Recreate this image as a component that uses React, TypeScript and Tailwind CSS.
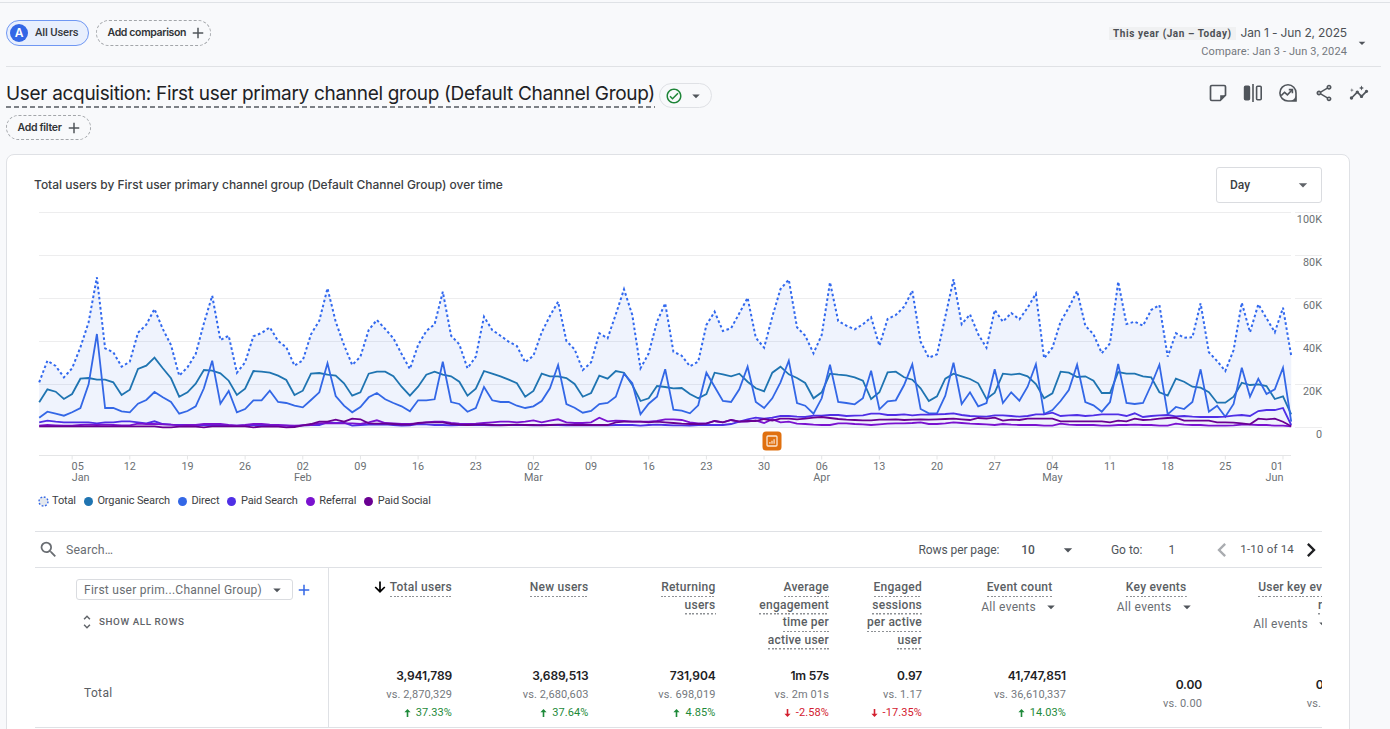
import { useState } from 'react';
import clsx from 'clsx';
import {
  MdAdd,
  MdArrowDropDown,
  MdChevronLeft,
  MdChevronRight,
  MdInsights,
  MdOutlineCheckCircle,
  MdOutlineShare,
  MdSearch,
  MdUnfoldMore,
} from 'react-icons/md';

// Daily series, Jan 1 - Jun 2. Stored in plot units: 667 is zero, 22 is 100K.
const total = [
  532, 467, 483, 517, 490, 427, 352, 217, 430, 442, 485, 470, 383, 359, 312, 372, 420, 512, 487, 447,
  355, 272, 405, 392, 503, 472, 394, 384, 367, 408, 427, 482, 466, 388, 347, 250, 350, 420, 480, 455,
  375, 345, 372, 400, 447, 492, 420, 378, 358, 260, 392, 418, 490, 455, 335, 375, 392, 410, 423, 472,
  452, 382, 333, 290, 408, 433, 495, 472, 385, 400, 328, 253, 330, 490, 445, 350, 295, 440, 452, 484,
  470, 360, 320, 378, 370, 325, 278, 398, 428, 335, 252, 224, 367, 392, 445, 390, 232, 348, 362, 373,
  358, 337, 422, 342, 330, 305, 257, 410, 458, 448, 335, 223, 358, 328, 388, 428, 315, 350, 324, 343,
  308, 266, 460, 428, 350, 308, 258, 362, 388, 445, 415, 230, 357, 350, 362, 315, 300, 455, 385, 398,
  397, 295, 442, 468, 498, 435, 293, 382, 298, 340, 382, 308, 452,
];
const organic = [
  592, 553, 560, 582, 567, 521, 519, 524, 524, 532, 570, 554, 492, 482, 458, 490, 520, 575, 562, 536,
  495, 497, 505, 527, 570, 551, 498, 500, 503, 512, 525, 570, 557, 506, 504, 509, 512, 535, 572, 562,
  506, 500, 500, 514, 545, 572, 545, 509, 500, 509, 514, 530, 572, 551, 498, 506, 514, 524, 535, 575,
  558, 506, 514, 514, 519, 537, 575, 564, 512, 521, 498, 503, 540, 588, 580, 543, 546, 550, 549, 567,
  580, 567, 503, 508, 514, 506, 530, 550, 559, 503, 485, 508, 519, 534, 580, 562, 506, 509, 511, 517,
  527, 582, 562, 502, 500, 517, 524, 550, 588, 574, 521, 506, 514, 522, 535, 582, 563, 506, 509, 506,
  514, 537, 580, 565, 500, 503, 516, 514, 527, 564, 564, 501, 506, 506, 514, 517, 562, 572, 521, 530,
  545, 548, 562, 593, 593, 575, 533, 540, 538, 543, 582, 574, 628,
];
const direct = [
  638, 620, 626, 632, 622, 609, 538, 387, 609, 609, 619, 622, 596, 585, 561, 577, 591, 626, 618, 604,
  550, 467, 596, 558, 622, 612, 586, 586, 557, 591, 594, 602, 607, 585, 562, 475, 573, 602, 622, 606,
  577, 564, 583, 594, 604, 619, 586, 586, 583, 470, 591, 597, 620, 609, 546, 586, 591, 591, 602, 609,
  604, 588, 550, 480, 597, 608, 623, 618, 597, 594, 575, 506, 535, 628, 596, 575, 493, 614, 617, 625,
  601, 503, 545, 588, 591, 553, 485, 591, 609, 580, 532, 467, 594, 602, 626, 580, 479, 591, 594, 598,
  580, 497, 613, 589, 586, 540, 478, 612, 625, 625, 572, 473, 597, 562, 604, 594, 493, 594, 562, 587,
  545, 478, 627, 615, 588, 555, 479, 591, 601, 620, 591, 477, 594, 597, 594, 540, 479, 628, 606, 612,
  591, 493, 620, 602, 635, 597, 488, 575, 521, 567, 553, 488, 650,
];
const paidSearch = [
  652, 647, 650, 652, 652, 652, 652, 655, 652, 652, 649, 649, 652, 655, 649, 657, 659, 660, 660, 660,
  660, 660, 661, 662, 662, 661, 660, 661, 662, 662, 662, 664, 661, 660, 660, 652, 654, 653, 662, 660,
  659, 659, 658, 660, 662, 661, 657, 658, 660, 660, 661, 660, 660, 660, 660, 661, 660, 660, 660, 660,
  661, 660, 660, 660, 661, 661, 661, 661, 661, 661, 660, 660, 660, 662, 660, 659, 660, 661, 661, 662,
  660, 660, 660, 660, 657, 650, 643, 638, 641, 638, 633, 633, 635, 636, 632, 632, 630, 630, 633, 632,
  631, 626, 626, 630, 630, 628, 631, 629, 629, 628, 627, 625, 630, 633, 634, 635, 631, 631, 633, 635,
  633, 628, 628, 623, 633, 631, 630, 633, 631, 628, 628, 628, 633, 625, 636, 633, 631, 630, 634, 633,
  635, 636, 636, 636, 635, 632, 630, 633, 618, 615, 615, 609, 660,
];
const referral = [
  662, 660, 661, 662, 662, 660, 659, 660, 659, 660, 661, 661, 656, 657, 657, 658, 659, 661, 660, 660,
  657, 657, 657, 660, 662, 660, 657, 657, 659, 660, 661, 662, 661, 660, 655, 654, 655, 655, 655, 657,
  652, 646, 654, 655, 657, 657, 655, 652, 650, 650, 654, 656, 657, 656, 654, 652, 650, 650, 652, 650,
  646, 652, 647, 643, 652, 654, 654, 652, 638, 649, 647, 648, 650, 650, 650, 648, 643, 643, 645, 652,
  655, 655, 648, 652, 645, 650, 650, 646, 654, 643, 652, 650, 656, 657, 659, 660, 660, 655, 655, 657,
  658, 660, 658, 656, 655, 655, 654, 652, 657, 657, 655, 652, 654, 656, 657, 658, 660, 657, 659, 660,
  660, 660, 662, 662, 656, 659, 660, 660, 660, 662, 662, 660, 660, 659, 660, 660, 662, 662, 656, 659,
  660, 660, 662, 662, 662, 661, 659, 659, 660, 660, 662, 662, 664,
];
const paidSocial = [
  664, 664, 664, 664, 664, 664, 664, 664, 664, 664, 664, 664, 664, 664, 664, 667, 667, 665, 664, 665,
  667, 664, 664, 664, 664, 664, 667, 665, 664, 665, 667, 666, 661, 657, 650, 650, 644, 650, 641, 643,
  655, 656, 656, 657, 659, 659, 654, 652, 652, 652, 657, 659, 660, 659, 659, 660, 661, 660, 659, 660,
  660, 661, 660, 659, 659, 660, 660, 660, 660, 660, 652, 650, 650, 650, 652, 650, 652, 654, 656, 657,
  657, 656, 648, 652, 645, 650, 648, 648, 642, 647, 641, 641, 643, 641, 638, 636, 639, 642, 644, 645,
  646, 646, 644, 644, 643, 645, 644, 643, 644, 643, 642, 641, 643, 645, 639, 641, 638, 647, 644, 645,
  641, 641, 641, 641, 649, 649, 649, 649, 649, 649, 652, 647, 649, 641, 645, 644, 641, 639, 638, 647,
  647, 647, 647, 652, 652, 653, 655, 658, 641, 643, 641, 650, 664,
];

const series = [
  { name: 'Organic Search', color: '#1f74b1', data: organic },
  { name: 'Direct', color: '#3367e6', data: direct },
  { name: 'Paid Search', color: '#4f2fe6', data: paidSearch },
  { name: 'Referral', color: '#7a12cf', data: referral },
  { name: 'Paid Social', color: '#6a0092', data: paidSocial },
];

const ticks = [
  ['05', 'Jan'], ['12'], ['19'], ['26'], ['02', 'Feb'], ['09'], ['16'], ['23'], ['02', 'Mar'], ['09'], ['16'],
  ['23'], ['30'], ['06', 'Apr'], ['13'], ['20'], ['27'], ['04', 'May'], ['11'], ['18'], ['25'], ['01', 'Jun'],
];

const xOf = (day: number) => 4.2 + day * 8.237;
const toPoints = (data: number[]) => data.map((v, i) => `${xOf(i).toFixed(1)},${(v / 3).toFixed(1)}`).join(' ');

interface Metric {
  lines: string[];
  width: string;
  headPad?: string;
  eventsPad?: string;
  sorted?: boolean;
  value: string;
  prev: string;
  change?: string;
}

const metrics: Metric[] = [
  { lines: ['Total users'], width: 'w-[123px]', sorted: true, value: '3,941,789', prev: '2,870,329', change: '37.33%' },
  { lines: ['New users'], width: 'w-[136.5px]', value: '3,689,513', prev: '2,680,603', change: '37.64%' },
  { lines: ['Returning', 'users'], width: 'w-[127px]', value: '731,904', prev: '698,019', change: '4.85%' },
  { lines: ['Average', 'engagement', 'time per', 'active user'], width: 'w-[113.5px]', value: '1m 57s', prev: '2m 01s', change: '-2.58%' },
  { lines: ['Engaged', 'sessions', 'per active', 'user'], width: 'w-[93px]', value: '0.97', prev: '1.17', change: '-17.35%' },
  { lines: ['Event count'], width: 'w-[144px]', headPad: 'pr-[13.5px]', eventsPad: '-mr-[7.5px]', value: '41,747,851', prev: '36,610,337', change: '14.03%' },
  { lines: ['Key events'], width: 'w-[136px]', headPad: 'pr-[15.5px]', eventsPad: '-mr-[9px]', value: '0.00', prev: '0.00' },
  { lines: ['User key event', 'rate'], width: 'w-[152px]', headPad: 'pr-3.5', eventsPad: 'mr-2', value: '0.00%', prev: '0.00%' },
];

const NoteIcon = () => (
  <svg width="18" height="18" viewBox="0 0 18 18" fill="none" stroke="#50555b" strokeWidth="1.7" strokeLinejoin="round">
    <path d="M2.8 1.5h12.4a1.3 1.3 0 0 1 1.3 1.3v8.4l-5.3 5.3H2.8a1.3 1.3 0 0 1-1.3-1.3V2.8a1.3 1.3 0 0 1 1.3-1.3Z" />
    <path d="M11.2 16.5v-5.3h5.3Z" fill="#50555b" stroke="none" />
  </svg>
);

const CompareIcon = () => (
  <svg width="20" height="20" viewBox="0 0 20 20" fill="none" stroke="#50555b" strokeWidth="1.6">
    <rect x="1.6" y="3.3" width="4.8" height="13.4" rx="1" fill="#50555b" />
    <path d="M10 1v18" />
    <rect x="13.6" y="3.3" width="4.6" height="13.4" rx="1" />
  </svg>
);

const InsightIcon = () => (
  <svg width="20" height="20" viewBox="0 0 20 20" fill="none" stroke="#50555b" strokeWidth="1.6">
    <path d="M10 1.8a8 8 0 1 0 0 16.2h8V10A8 8 0 0 0 10 1.8Z" />
    <path d="M13 18h5.2v-5.4a9 9 0 0 1-5.2 5.4Z" fill="#50555b" stroke="none" />
    <path d="M3.2 12.6l3.4-3.3 2.8 2.5 4.6-4.8" />
    <path d="M10.8 6.6h3.6v3.6" />
  </svg>
);

const SortArrow = () => (
  <svg width="12" height="12" viewBox="0 0 12 12" fill="none" stroke="#000" strokeWidth="1.7">
    <path d="M6 .5v10M1.2 6 6 10.7 10.8 6" />
  </svg>
);

const ChangeArrow = ({ down }: { down: boolean }) => (
  <svg width="7" height="8" viewBox="0 0 7 8" fill="currentColor" className={clsx(down && 'rotate-180')}>
    <path d="M3.5 0 6.6 3.2H4.3V8H2.7V3.2H.4Z" />
  </svg>
);

const Chart = () => (
  <svg width="1288" height="284" viewBox="0 0 1288 284" className="block font-[Roboto,sans-serif]">
    {[0, 1, 2, 3, 4, 5].map((i) => {
      const y = 7.5 + i * 43;
      return (
        <g key={i}>
          <path d={`M4 ${y}H1256M1260 ${y}H1287`} stroke="#ededee" />
          <text x="1287" y={y + 10.5} textAnchor="end" fontSize="10.8" letterSpacing="0.05" fill="#6b6f73">
            {i === 5 ? '0' : `${100 - i * 20}K`}
          </text>
        </g>
      );
    })}
    <polygon points={`${xOf(0)},222.5 ${toPoints(total)} ${xOf(152)},222.5`} fill="#3367e6" fillOpacity="0.08" />
    <polyline points={toPoints(total)} fill="none" stroke="#3168ee" strokeWidth="2" strokeDasharray="2.6 2.5" />
    {series.map((s) => (
      <polyline key={s.name} points={toPoints(s.data)} fill="none" stroke={s.color} strokeWidth="1.8" />
    ))}
    <path d="M4 250.5H1256" stroke="#e4e5e6" />
    {ticks.map(([day, month], i) => {
      const x = xOf(4 + i * 7);
      const dayX = i === 0 ? x + 5.5 : i === 21 ? x - 6 : x;
      const monthX = i === 0 ? x + 8.5 : i === 21 ? x - 8.5 : x;
      return (
        <g key={i} fontSize="10.8" fill="#6b6f73" textAnchor="middle">
          <path d={`M${x} 250v4.5`} stroke="#e4e5e6" />
          <text x={dayX} y="265">{day}</text>
          {month && <text x={monthX} y="275.7">{month}</text>}
        </g>
      );
    })}
    <rect x="727.5" y="226.5" width="19" height="19" rx="3.5" fill="#e0700f" />
    <rect x="732" y="231" width="10" height="10" rx="1" fill="none" stroke="#fbe6d2" strokeWidth="1.3" />
    <path d="M734.9 238.8v-1.8M737 238.8v-3M739.1 238.8v-4.6" stroke="#fbe6d2" strokeWidth="1.2" />
  </svg>
);

const MetricHead = ({ m }: { m: Metric }) => (
  <div className={clsx('shrink-0 pt-3', m.width, m.headPad)}>
    {m.lines.map((line, i) => (
      <div key={line} className="flex h-[17.67px] items-start justify-end gap-1">
        {m.sorted && i === 0 && (
          <span className="pt-0.5">
            <SortArrow />
          </span>
        )}
        <span className="h-[18px] bg-[repeating-linear-gradient(90deg,#8e9195_0_2px,transparent_2px_3.7px)] bg-[length:100%_1.5px] bg-bottom bg-no-repeat text-[12px] leading-[17px] font-medium tracking-[0.25px] whitespace-nowrap text-[#5a5e63]">
          {line}
        </span>
      </div>
    ))}
    {m.eventsPad && (
      <div className={clsx('flex items-center justify-end gap-1 pt-px text-[12px] leading-[18px] tracking-[0.3px] whitespace-nowrap text-[#696d72]', m.eventsPad)}>
        All events
        <MdArrowDropDown className="ml-0.5 h-[18px] w-[18px] text-[#50555b]" />
      </div>
    )}
  </div>
);

const MetricTotal = ({ m }: { m: Metric }) => {
  const down = m.change?.startsWith('-') ?? false;
  return (
    <div className={clsx('flex shrink-0 flex-col items-end whitespace-nowrap', m.width, m.change ? 'pt-[7px]' : 'pt-4')}>
      <span className="font-[Inter,sans-serif] text-[12px] leading-[18px] font-semibold tracking-[-0.15px] text-[#202124]">{m.value}</span>
      <span className="mt-px text-[11px] leading-[18px] tracking-[0.12px] text-[#74787d]">vs. {m.prev}</span>
      {m.change && (
        <span className={clsx('flex items-center gap-[5px] text-[11px] leading-[18px] tracking-[0.1px]', down ? 'text-[#d3202f]' : 'text-[#1e8a3a]')}>
          <ChangeArrow down={down} />
          {m.change}
        </span>
      )}
    </div>
  );
};

const App = () => {
  const [search, setSearch] = useState('');

  return (
    <div className="h-[729px] w-[1390px] overflow-hidden bg-[#f8f9fb] font-[Roboto,sans-serif] text-[#3c4043]">
      <div className="h-0.5" />
      <div className="h-px bg-[#dfe2e6]" />

      {/* Comparison bar */}
      <div className="ml-1.5 flex h-16 w-[1375px] items-start justify-between border-b border-[#e0e2e5]">
        <div className="mt-[17px] flex gap-[7px]">
          <button className="flex h-[26px] w-[83px] items-center gap-[7px] rounded-full border-[1.5px] border-[#6f97f3] bg-[#e8effd] pl-[3px] text-[11.2px] font-medium tracking-[-0.15px] whitespace-nowrap text-[#36393d]">
            <span className="flex h-[18px] w-[18px] items-center justify-center rounded-full bg-[#3367e6] font-[Inter,sans-serif] text-[12px] font-semibold text-white">A</span>
            All Users
          </button>
          <button className="flex h-[26px] w-[115px] items-center justify-between rounded-full border border-dashed border-[#a3a6aa] pr-[3px] pl-[10.5px] font-[Inter,sans-serif] text-[10.5px] font-semibold tracking-[-0.35px] whitespace-nowrap text-[#303336]">
            Add comparison
            <MdAdd className="h-[18px] w-[18px] text-[#50555b]" />
          </button>
        </div>
        <div className="mt-[21px] flex items-center gap-[7px] pr-[11px]">
          <div className="flex flex-col items-end">
            <div className="flex h-[18px] items-center gap-[5px]">
              <span className="bg-[#f0f1f2] px-1 text-[10px] leading-[13px] font-bold tracking-[0.57px] text-[#4c5055]">This year (Jan – Today)</span>
              <span className="font-[Inter,sans-serif] text-[12px] tracking-[-0.15px] text-[#4c5055]">Jan 1 - Jun 2, 2025</span>
            </div>
            <span className="mt-px text-[11px] leading-[18px] tracking-[0.12px] text-[#74787d]">Compare: Jan 3 - Jun 3, 2024</span>
          </div>
          <MdArrowDropDown className="h-4 w-4 text-[#50555b]" />
        </div>
      </div>

      {/* Report title */}
      <div className="flex h-12 items-start justify-between pr-[21px] pl-1.5">
        <div className="flex">
          <h1 className="mt-[13px] h-[28px] bg-[repeating-linear-gradient(90deg,#7c8086_0_5px,transparent_5px_8px)] bg-[length:100%_2px] bg-bottom bg-no-repeat font-[Inter,sans-serif] text-[19px] leading-7 tracking-[-0.31px] whitespace-nowrap text-[#202124]">
            User acquisition: First user primary channel group (Default Channel Group)
          </h1>
          <button className="mt-4 ml-1 flex h-[25px] w-[53px] items-center justify-between rounded-full border border-[#dfe1e5] pr-1.5 pl-[5px]">
            <MdOutlineCheckCircle className="h-[18px] w-[18px] text-[#1e8538]" />
            <MdArrowDropDown className="h-[18px] w-[18px] text-[#50555b]" />
          </button>
        </div>
        <div className="mt-4 flex items-center gap-[15.3px] text-[#50555b]">
          <span className="-ml-px pr-px">
            <NoteIcon />
          </span>
          <CompareIcon />
          <InsightIcon />
          <MdOutlineShare className="h-5 w-5" />
          <MdInsights className="h-5 w-5" />
        </div>
      </div>
      <div className="h-[39px] pl-1.5">
        <button className="flex h-[25px] w-[85px] items-center justify-between rounded-full border border-dashed border-[#a3a6aa] pr-[7px] pl-[10.5px] font-[Inter,sans-serif] text-[10.5px] font-semibold tracking-[-0.3px] whitespace-nowrap text-[#303336]">
          Add filter
          <MdAdd className="h-[18px] w-[18px] text-[#50555b]" />
        </button>
      </div>

      <div className="ml-1.5 h-[600px] w-[1344px] rounded-t-lg border border-[#dfe1e5] bg-white pl-7">
        {/* Chart */}
        <div className="flex h-[50px] w-[1287px] items-start justify-between">
          <h2 className="mt-[21px] -ml-px font-[Inter,sans-serif] text-[12px] leading-[18px] font-medium tracking-[-0.01px] text-[#3c4043]">
            Total users by First user primary channel group (Default Channel Group) over time
          </h2>
          <button className="mt-3 flex h-9 w-[106px] items-center justify-between rounded-[3px] border border-[#dadce0] pr-2 pl-[13px] text-[12px] font-medium text-[#3c4043]">
            Day
            <MdArrowDropDown className="h-5 w-5 text-[#5f6368]" />
          </button>
        </div>
        <Chart />
        <div className="flex h-[42px] items-start gap-2 pt-0.5 pl-[2.5px] text-[11px] leading-[20px] tracking-[-0.13px] text-[#3c4043]">
          <span className="flex items-center gap-[3.5px]">
            <svg width="11" height="11" viewBox="0 0 11 11">
              <circle cx="5.5" cy="5.5" r="4.5" fill="#e4e8ee" stroke="#3367e6" strokeWidth="1.4" strokeDasharray="1.8 1.7" />
            </svg>
            Total
          </span>
          {series.map((s) => (
            <span key={s.name} className="flex items-center gap-[4.5px]">
              <span className="h-[9px] w-[9px] rounded-full" style={{ backgroundColor: s.color }} />
              {s.name}
            </span>
          ))}
        </div>

        {/* Table */}
        <div className="w-[1287px] overflow-hidden">
          <div className="flex h-[37px] items-center justify-between border-y border-[#dfe1e5] text-[12px] text-[#50555b]">
            <label className="flex items-center gap-[7px] pl-[3px]">
              <MdSearch className="h-[21px] w-[21px] text-[#696d72]" />
              <input
                value={search}
                onChange={(e) => setSearch(e.target.value)}
                placeholder="Search…"
                className="w-60 pt-0.5 text-[12.3px] tracking-[0.15px] outline-none placeholder:text-[#696d72]"
              />
            </label>
            <div className="flex items-center">
              <span className="tracking-[-0.07px]">Rows per page:</span>
              <span className="ml-[22px] font-medium">10</span>
              <MdArrowDropDown className="ml-[23px] h-5 w-5" />
              <span className="ml-[33px]">Go to:</span>
              <span className="ml-[26px]">1</span>
              <MdChevronLeft className="ml-[33px] h-7 w-7 text-[#a9acb0]" />
              <span className="ml-1 text-[11.5px] tracking-[0.2px]">1-10 of 14</span>
              <MdChevronRight className="-mr-[3px] ml-[3px] h-7 w-7 text-[#202124]" />
            </div>
          </div>

          <div className="-mt-px flex h-[161px] border-b border-[#dfe1e5]">
            <div className="flex w-[294px] shrink-0 flex-col border-r border-[#dfe1e5] pt-3 pl-[41px]">
              <div className="flex items-center gap-[2px]">
                <button className="flex h-[21px] w-[217px] items-center justify-between rounded-[3px] border border-[#dadce0] pr-1.5 pl-[7px] text-[12px] tracking-[0.26px] whitespace-nowrap text-[#696d72]">
                  First user prim...Channel Group)
                  <MdArrowDropDown className="h-[18px] w-[18px] text-[#50555b]" />
                </button>
                <MdAdd className="h-[18px] w-[18px] text-[#3367e6]" />
              </div>
              <button className="mt-[13px] flex items-center gap-[3px] pl-0.5 text-[9.8px] leading-4 font-medium tracking-[0.6px] text-[#5f6368]">
                <MdUnfoldMore className="h-[18px] w-[18px]" />
                SHOW ALL ROWS
              </button>
              <span className="mt-[53px] pl-2 text-[12px] leading-[18px] tracking-[0.35px] text-[#5a5e63]">Total</span>
            </div>
            <div className="flex flex-col">
              <div className="flex h-[93px]">
                {metrics.map((m) => (
                  <MetricHead key={m.lines[0]} m={m} />
                ))}
              </div>
              <div className="flex">
                {metrics.map((m) => (
                  <MetricTotal key={m.lines[0]} m={m} />
                ))}
              </div>
            </div>
          </div>
        </div>
      </div>
    </div>
  );
};

export default App;
